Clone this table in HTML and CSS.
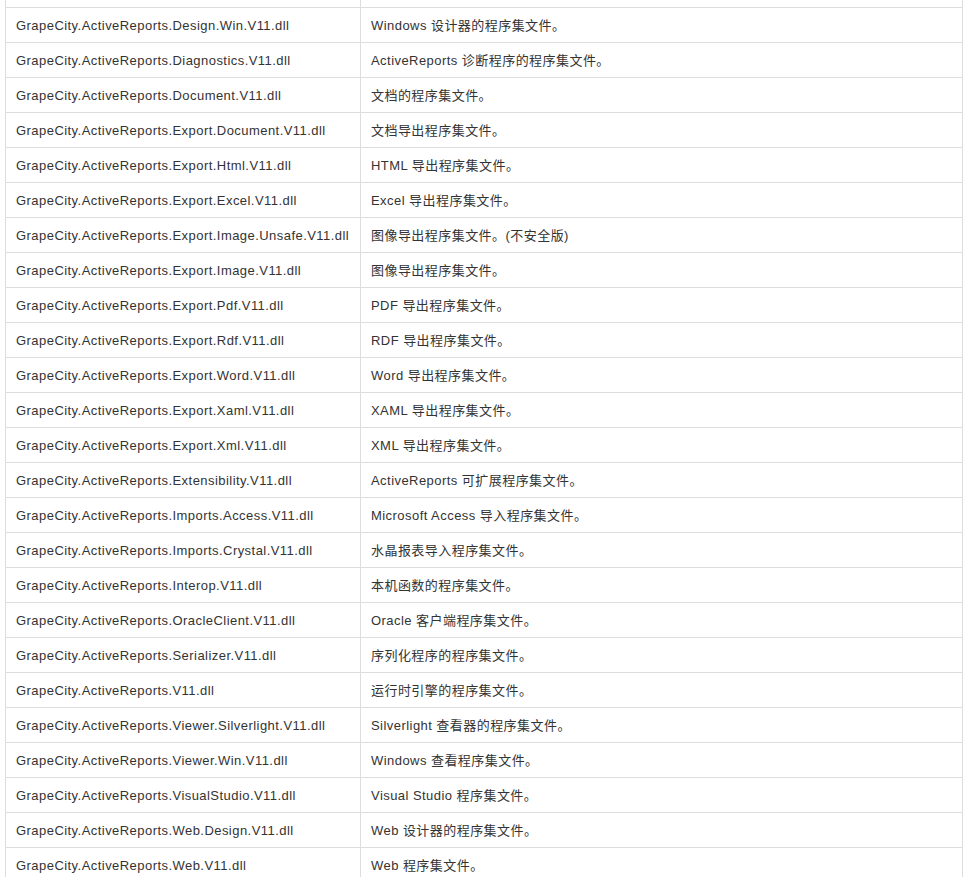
FILE: index.html
```html
<!DOCTYPE html>
<html lang="zh-CN">
<head>
<meta charset="utf-8">
<title>Assemblies</title>
<link rel="stylesheet" href="styles.css">
</head>
<body>
<div class="page">
<table class="files">
<colgroup><col class="c-name"><col class="c-desc"></colgroup>
<tbody>
<tr class="prev"><td></td><td></td></tr>
<tr><td>GrapeCity.ActiveReports.Design.Win.V11.dll</td><td>Windows 设计器的程序集文件。</td></tr>
<tr><td>GrapeCity.ActiveReports.Diagnostics.V11.dll</td><td>ActiveReports 诊断程序的程序集文件。</td></tr>
<tr><td>GrapeCity.ActiveReports.Document.V11.dll</td><td>文档的程序集文件。</td></tr>
<tr><td>GrapeCity.ActiveReports.Export.Document.V11.dll</td><td>文档导出程序集文件。</td></tr>
<tr><td>GrapeCity.ActiveReports.Export.Html.V11.dll</td><td>HTML 导出程序集文件。</td></tr>
<tr><td>GrapeCity.ActiveReports.Export.Excel.V11.dll</td><td>Excel 导出程序集文件。</td></tr>
<tr><td>GrapeCity.ActiveReports.Export.Image.Unsafe.V11.dll</td><td>图像导出程序集文件。(不安全版)</td></tr>
<tr><td>GrapeCity.ActiveReports.Export.Image.V11.dll</td><td>图像导出程序集文件。</td></tr>
<tr><td>GrapeCity.ActiveReports.Export.Pdf.V11.dll</td><td>PDF 导出程序集文件。</td></tr>
<tr><td>GrapeCity.ActiveReports.Export.Rdf.V11.dll</td><td>RDF 导出程序集文件。</td></tr>
<tr><td>GrapeCity.ActiveReports.Export.Word.V11.dll</td><td>Word 导出程序集文件。</td></tr>
<tr><td>GrapeCity.ActiveReports.Export.Xaml.V11.dll</td><td>XAML 导出程序集文件。</td></tr>
<tr><td>GrapeCity.ActiveReports.Export.Xml.V11.dll</td><td>XML 导出程序集文件。</td></tr>
<tr><td>GrapeCity.ActiveReports.Extensibility.V11.dll</td><td>ActiveReports 可扩展程序集文件。</td></tr>
<tr><td>GrapeCity.ActiveReports.Imports.Access.V11.dll</td><td>Microsoft Access 导入程序集文件。</td></tr>
<tr><td>GrapeCity.ActiveReports.Imports.Crystal.V11.dll</td><td>水晶报表导入程序集文件。</td></tr>
<tr><td>GrapeCity.ActiveReports.Interop.V11.dll</td><td>本机函数的程序集文件。</td></tr>
<tr><td>GrapeCity.ActiveReports.OracleClient.V11.dll</td><td>Oracle 客户端程序集文件。</td></tr>
<tr><td>GrapeCity.ActiveReports.Serializer.V11.dll</td><td>序列化程序的程序集文件。</td></tr>
<tr><td>GrapeCity.ActiveReports.V11.dll</td><td>运行时引擎的程序集文件。</td></tr>
<tr><td>GrapeCity.ActiveReports.Viewer.Silverlight.V11.dll</td><td>Silverlight 查看器的程序集文件。</td></tr>
<tr><td>GrapeCity.ActiveReports.Viewer.Win.V11.dll</td><td>Windows 查看程序集文件。</td></tr>
<tr><td>GrapeCity.ActiveReports.VisualStudio.V11.dll</td><td>Visual Studio 程序集文件。</td></tr>
<tr><td>GrapeCity.ActiveReports.Web.Design.V11.dll</td><td>Web 设计器的程序集文件。</td></tr>
<tr><td>GrapeCity.ActiveReports.Web.V11.dll</td><td>Web 程序集文件。</td></tr>
</tbody>
</table>
</div>
</body>
</html>
```

FILE: styles.css
```css
html, body {
  margin: 0;
  padding: 0;
  background: #fff;
}

.page {
  padding-left: 5px;
  margin-top: -28px;
}

.files {
  width: 958px;
  border-collapse: collapse;
  font-family: "Liberation Sans", Arial, "Noto Sans CJK SC", sans-serif;
  font-size: 13px;
  line-height: 18px;
  letter-spacing: 0.45px;
  color: #333;
  table-layout: fixed;
}

.c-name {
  width: 355px;
}

.files td {
  border: 1px solid #ddd;
  padding: 9px 10px 7px;
  height: 18px;
  vertical-align: middle;
  white-space: nowrap;
}
```
